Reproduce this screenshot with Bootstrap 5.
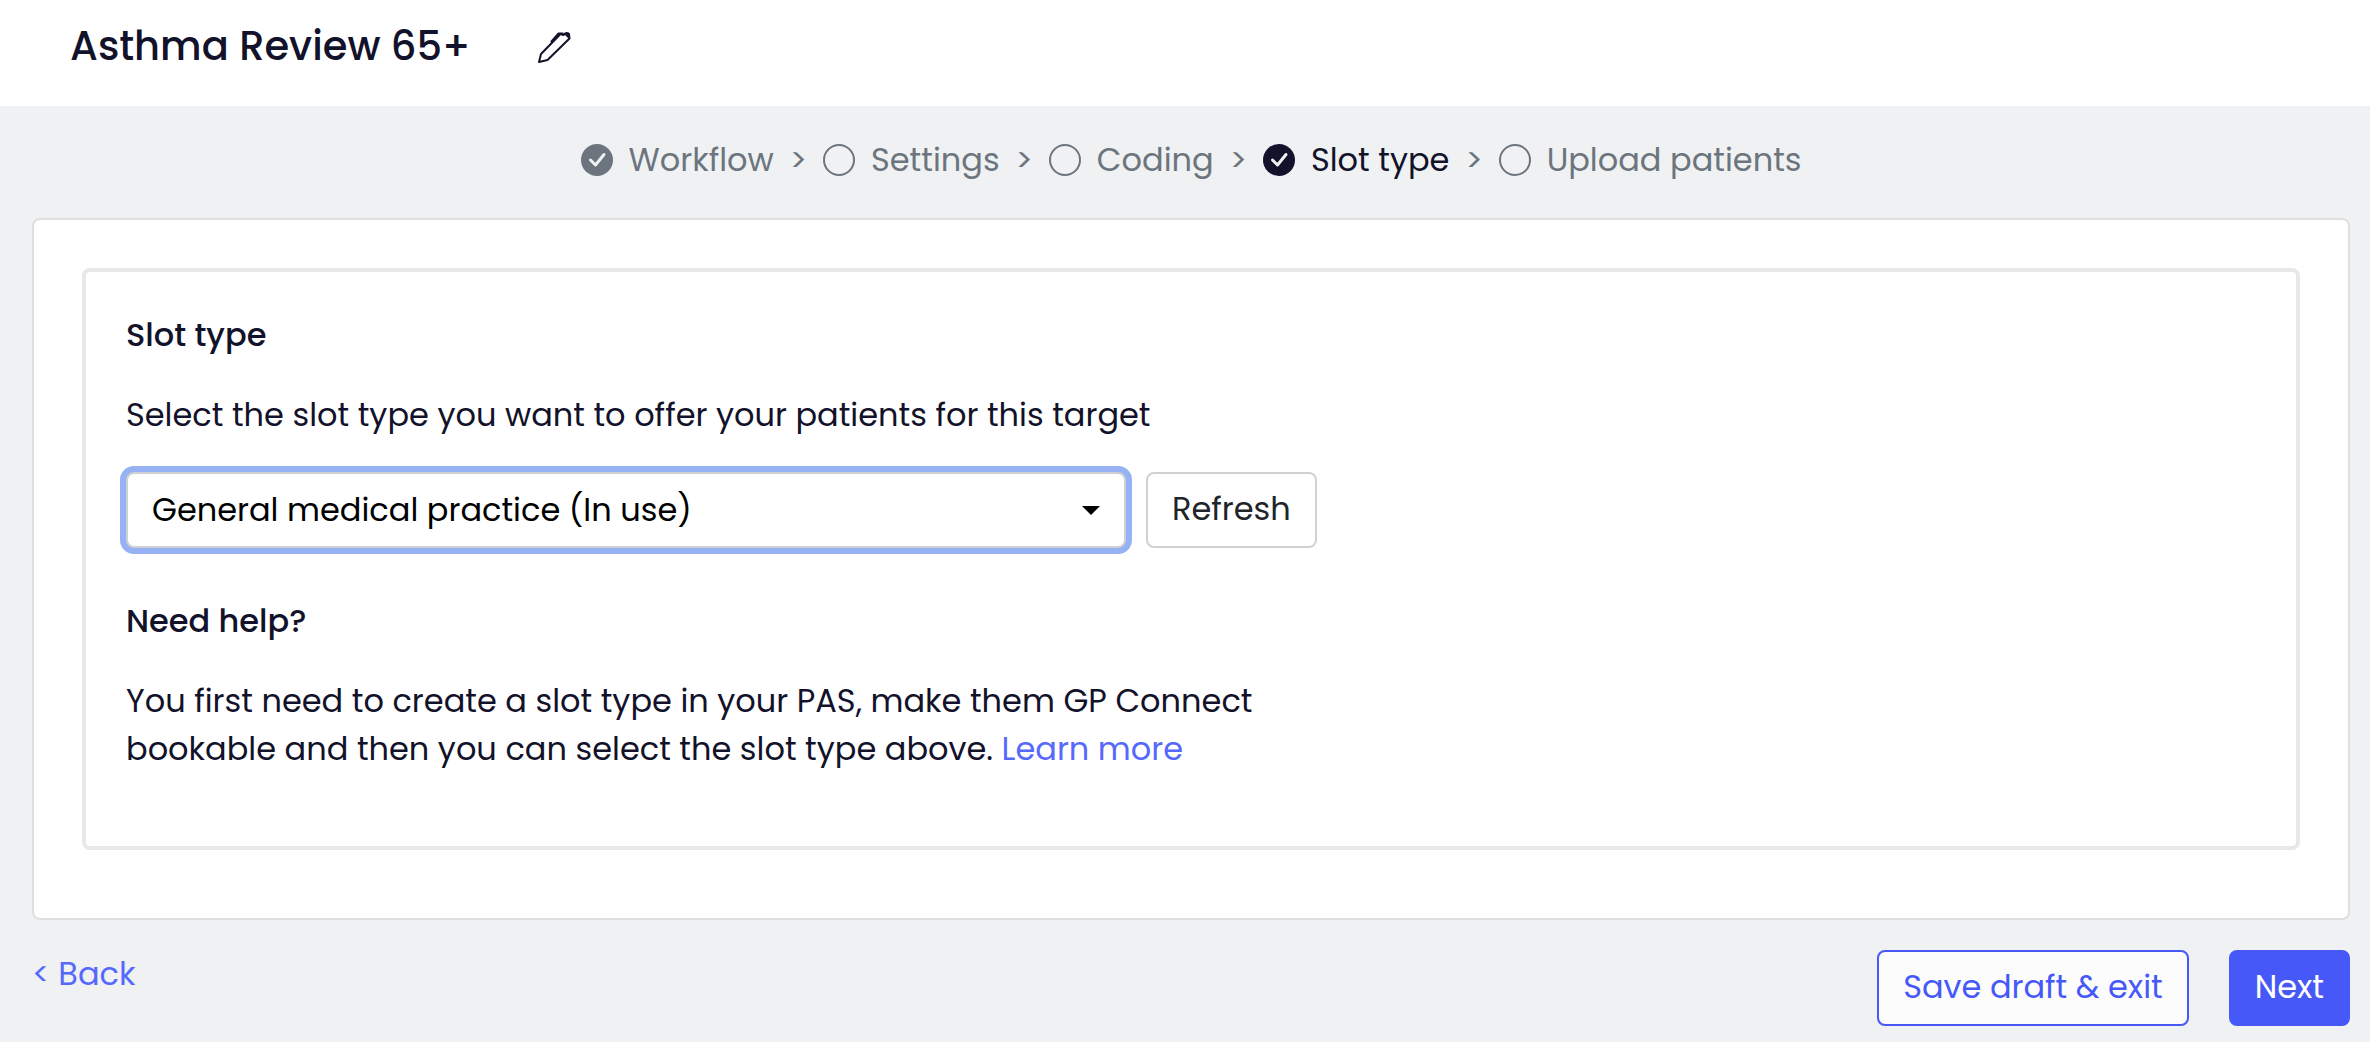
<!DOCTYPE html>
<html lang="en">
<head>
<meta charset="utf-8">
<meta name="viewport" content="width=device-width, initial-scale=1">
<title>Asthma Review 65+</title>
<link rel="stylesheet" href="https://cdn.jsdelivr.net/npm/bootstrap@5.3.0/dist/css/bootstrap.min.css">
<style>
:root{--ink:#12122a;--muted-step:#6c757d;--brand:#4659f8;--brand-link:#5669fb}
body{font-family:Poppins,Inter,"Liberation Sans",sans-serif;font-size:32px;line-height:48px;color:var(--ink);background:#eff1f3}
.page-head{padding:22px 70px 36px;gap:65px}
.page-title{font-size:40px;line-height:48px;font-weight:500}
.icon-btn{background:none;border:0;padding:2px 0 0;line-height:0;color:var(--ink)}
.page-body{padding:0 20px 16px 32px}
.stepper{padding:30px 0 34px;gap:16px;color:var(--muted-step)}
.step-item{gap:16px}
.step-item a{color:inherit;text-decoration:none}
.step-item.current{color:var(--ink)}
.panel-outer{border:2px solid #dedfe0;border-radius:8px;padding:48px 48px 68px}
.panel-inner{border:4px solid #e8e8ea;border-radius:8px;padding:39px 40px 73px}
.section-title{font-size:32px;line-height:48px;font-weight:500;margin-bottom:32px}
.slot-form{gap:20px;margin:33px 0 49px}
.slot-select{width:1000px;height:76px;padding:0 64px 0 24px;font-size:32px;line-height:48px;color:#000;border:2px solid #ced0d3;border-radius:8px;background-position:right 24px center;background-size:18px 9px;background-image:url("data:image/svg+xml,%3Csvg xmlns='http://www.w3.org/2000/svg' viewBox='0 0 18 9'%3E%3Cpath d='M0 0h18l-9 9z'/%3E%3C/svg%3E");box-shadow:0 0 0 6px #96b2f5}
.btn-big{font-size:32px;line-height:48px;padding:11px 24px 13px;border-width:2px;border-radius:8px}
.btn-plain{border-color:#d0d1d3;color:#212529;background:#fff}
.btn-line{border-color:var(--brand);color:var(--brand);background:#fcfcfc}
.btn-fill{border-color:var(--brand);color:#fff;background:var(--brand)}
.help-text{max-width:1160px}
.text-link{color:var(--brand-link);text-decoration:none}
.page-foot{margin-top:30px}
.foot-actions{gap:40px}
</style>
</head>
<body>
<header class="page-head bg-white d-flex align-items-center">
  <h1 class="page-title mb-0">Asthma Review 65+</h1>
  <button class="icon-btn" type="button" aria-label="Edit name">
    <svg width="36" height="36" viewBox="0 0 36 36" fill="none" stroke="currentColor" stroke-width="2" stroke-linejoin="round" stroke-linecap="round"><path d="M3 33l2-8L24.500 5l3 1 3-2 2.500 1 .5 4.500L11.500 31z"/><path d="M28 4.500l5 5V4.500z" fill="currentColor" stroke-width="1"/><path d="M15.500 12.500l7-8h4"/></svg>
  </button>
</header>
<div class="page-body">
<nav aria-label="Progress">
  <ol class="stepper list-unstyled mb-0 d-flex justify-content-center align-items-center">
    <li class="step-item d-flex align-items-center"><svg width="32" height="32" viewBox="0 0 32 32"><circle cx="16" cy="16" r="16" fill="currentColor"/><path d="M9.500 16l5 5 8.500-10.500" fill="none" stroke="#eff1f3" stroke-width="3" stroke-linecap="round" stroke-linejoin="round"/></svg><a href="#">Workflow</a></li>
    <li aria-hidden="true">&gt;</li>
    <li class="step-item d-flex align-items-center"><svg width="32" height="32" viewBox="0 0 32 32"><circle cx="16" cy="16" r="15" fill="none" stroke="currentColor" stroke-width="2"/></svg><a href="#">Settings</a></li>
    <li aria-hidden="true">&gt;</li>
    <li class="step-item d-flex align-items-center"><svg width="32" height="32" viewBox="0 0 32 32"><circle cx="16" cy="16" r="15" fill="none" stroke="currentColor" stroke-width="2"/></svg><a href="#">Coding</a></li>
    <li aria-hidden="true">&gt;</li>
    <li class="step-item current d-flex align-items-center"><svg width="32" height="32" viewBox="0 0 32 32"><circle cx="16" cy="16" r="16" fill="currentColor"/><path d="M9.500 16l5 5 8.500-10.500" fill="none" stroke="#eff1f3" stroke-width="3" stroke-linecap="round" stroke-linejoin="round"/></svg><a href="#" aria-current="step">Slot type</a></li>
    <li aria-hidden="true">&gt;</li>
    <li class="step-item d-flex align-items-center"><svg width="32" height="32" viewBox="0 0 32 32"><circle cx="16" cy="16" r="15" fill="none" stroke="currentColor" stroke-width="2"/></svg><a href="#">Upload patients</a></li>
  </ol>
</nav>
<main>
  <div class="panel-outer bg-white">
    <section class="panel-inner">
      <h2 class="section-title">Slot type</h2>
      <label for="slot">Select the slot type you want to offer your patients for this target</label>
      <div class="slot-form d-flex">
        <select id="slot" class="form-select slot-select"><option>General medical practice (In use)</option></select>
        <button type="button" class="btn btn-big btn-plain">Refresh</button>
      </div>
      <h2 class="section-title">Need help?</h2>
      <p class="help-text mb-0">You first need to create a slot type in your PAS, make them GP Connect bookable and then you can select the slot type above. <a class="text-link" href="#">Learn more</a></p>
    </section>
  </div>
  <div class="page-foot d-flex justify-content-between align-items-start">
    <a class="text-link" href="#">&lt; Back</a>
    <div class="foot-actions d-flex">
      <button type="button" class="btn btn-big btn-line">Save draft &amp; exit</button>
      <button type="button" class="btn btn-big btn-fill">Next</button>
    </div>
  </div>
</main>
</div>
<script src="https://cdn.jsdelivr.net/npm/bootstrap@5.3.0/dist/js/bootstrap.bundle.min.js"></script>
</body>
</html>
